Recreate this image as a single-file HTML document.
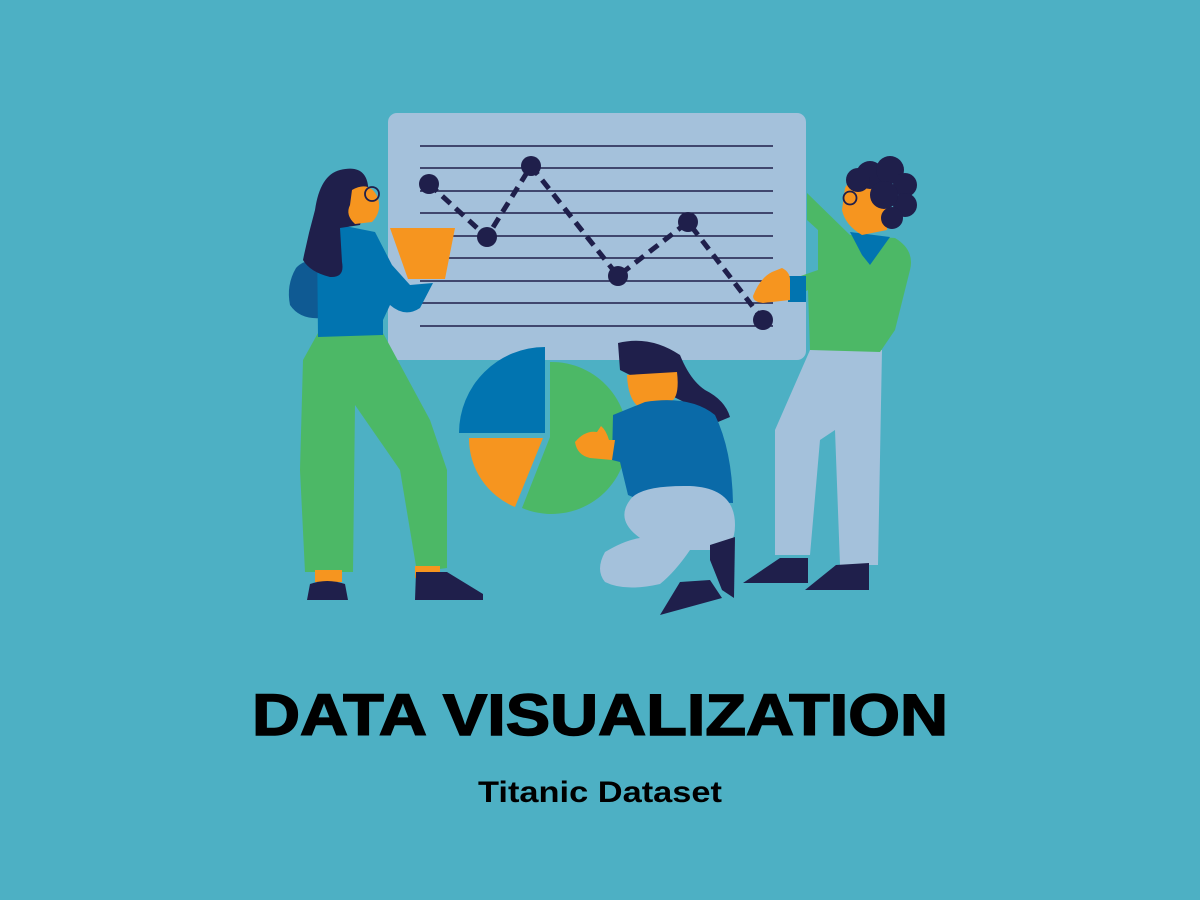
<!DOCTYPE html>
<html><head><meta charset="utf-8"><style>
html,body{margin:0;padding:0;background:#4db0c4;}
svg{display:block}
</style></head><body>
<svg width="1200" height="900" viewBox="0 0 1200 900" xmlns="http://www.w3.org/2000/svg">
<rect width="1200" height="900" fill="#4db0c4"/>
<!-- board -->
<rect x="388" y="113" width="418" height="247" rx="9" fill="#a4c1db"/>
<g stroke="#1f1f4b" stroke-width="1.5">
<line x1="420" y1="146" x2="773" y2="146"/><line x1="420" y1="168" x2="773" y2="168"/>
<line x1="420" y1="191" x2="773" y2="191"/><line x1="420" y1="213" x2="773" y2="213"/>
<line x1="420" y1="236" x2="773" y2="236"/><line x1="420" y1="258" x2="773" y2="258"/>
<line x1="420" y1="281" x2="773" y2="281"/><line x1="420" y1="303" x2="773" y2="303"/>
<line x1="420" y1="326" x2="773" y2="326"/>
</g>
<polyline points="429,184 487,237 531,166 618,276 688,222 763,320" fill="none" stroke="#1f1f4b" stroke-width="5" stroke-dasharray="11,7"/>
<g fill="#1f1f4b"><circle cx="429" cy="184" r="10"/><circle cx="487" cy="237" r="10"/><circle cx="531" cy="166" r="10"/><circle cx="618" cy="276" r="10"/><circle cx="688" cy="222" r="10"/><circle cx="763" cy="320" r="10"/></g>
<!-- pie -->
<path d="M545,433 L459,433 A86,86 0 0 1 545,347 Z" fill="#0174b0"/>
<path d="M543,438 L469,438 A74,74 0 0 0 515,507 Z" fill="#f6951f"/>
<path d="M550,437 L550,362 A76,76 0 1 1 522,508 Z" fill="#4cb866"/>
<!-- left woman -->
<path d="M318,333 L383,333 L430,420 L447,470 L447,568 L417,572 L400,470 L355,405 L353,572 L305,572 L300,470 L303,360 Z" fill="#4cb866"/>
<rect x="315" y="570" width="27" height="12" fill="#f6951f"/>
<rect x="415" y="566" width="25" height="12" fill="#f6951f"/>
<path d="M307,600 L310,584 Q327,578 345,584 L348,600 Z" fill="#1f1f4b"/>
<path d="M415,600 L416,572 L447,572 L483,594 L483,600 Z" fill="#1f1f4b"/>
<path d="M296,268 Q305,258 320,262 L322,318 Q300,320 290,305 Q286,285 296,268 Z" fill="#0f5a93"/>
<path d="M317,236 L345,226 L375,232 L392,265 L410,285 L433,283 L420,308 Q405,318 390,305 L383,320 L383,335 L318,337 Z" fill="#0174b0"/>
<path d="M390,228 L455,228 L445,279 L408,279 Z" fill="#f6951f"/>
<path d="M340,170 Q372,162 368,200 L360,225 L340,228 L342,262 Q345,278 330,277 Q310,272 303,260 Q308,235 315,210 Q320,175 340,170 Z" fill="#1f1f4b"/>
<path d="M352,190 Q370,180 378,198 Q382,212 372,222 L355,224 Q345,215 350,205 Z" fill="#f6951f"/>
<circle cx="372" cy="194" r="7" fill="none" stroke="#1f1f4b" stroke-width="1.8"/>
<!-- crouching woman -->
<path d="M618,343 Q650,335 680,355 Q690,380 705,390 Q725,400 730,417 L718,422 Q700,410 680,400 L620,370 Z" fill="#1f1f4b"/>
<path d="M627,375 L677,372 Q680,398 670,402 L640,408 Q628,400 627,375 Z" fill="#f6951f"/>
<path d="M613,415 L645,402 Q690,395 715,415 Q732,450 733,503 L640,500 L628,495 L620,462 L612,460 Z" fill="#0a6aa8"/>
<path d="M575,442 Q585,430 597,432 L601,426 Q606,430 609,440 L615,440 L612,460 L590,458 Q577,455 575,442 Z" fill="#f6951f"/>
<path d="M630,500 Q640,485 690,486 Q735,488 735,525 Q735,548 718,550 L690,550 Q675,572 660,584 Q625,592 605,582 Q595,570 605,552 Q625,540 640,538 Q615,520 630,500 Z" fill="#a4c1db"/>
<path d="M660,615 L680,582 L710,580 L722,598 Z" fill="#1f1f4b"/>
<path d="M710,545 L735,537 L734,598 L722,590 L710,560 Z" fill="#1f1f4b"/>
<!-- right man -->
<path d="M810,350 L882,350 L878,565 L840,565 L835,430 L820,440 L810,555 L775,555 L775,430 Z" fill="#a4c1db"/>
<path d="M743,583 L780,558 L808,558 L808,583 Z" fill="#1f1f4b"/>
<path d="M805,590 L836,565 L869,563 L869,590 Z" fill="#1f1f4b"/>
<path d="M807,193 L850,235 L895,238 Q915,250 910,270 L895,330 L880,352 L810,350 L808,290 L790,300 L795,278 L818,270 L818,230 L807,220 Z" fill="#4cb866"/>
<rect x="788" y="276" width="18" height="26" fill="#0174b0"/>
<path d="M753,296 Q760,278 772,272 L782,268 Q790,272 790,280 L790,300 L763,303 Q753,302 753,296 Z" fill="#f6951f"/>
<path d="M850,232 L890,237 L870,265 L862,255 Z" fill="#0174b0"/>
<path d="M845,188 Q850,178 868,180 L888,200 L887,230 L862,235 Q845,225 842,210 Z" fill="#f6951f"/>
<g fill="#1f1f4b"><circle cx="870" cy="175" r="14"/><circle cx="890" cy="170" r="14"/><circle cx="905" cy="185" r="12"/><circle cx="905" cy="205" r="12"/><circle cx="892" cy="218" r="11"/><circle cx="858" cy="180" r="12"/><circle cx="884" cy="195" r="14"/></g>
<circle cx="850" cy="198" r="6.5" fill="none" stroke="#1f1f4b" stroke-width="1.8"/>
<!-- text -->
<text x="600" y="735" text-anchor="middle" font-family="Liberation Sans, sans-serif" font-weight="900" font-size="58" fill="#000" textLength="696" lengthAdjust="spacingAndGlyphs" stroke="#000" stroke-width="1.5">DATA VISUALIZATION</text>
<text x="600" y="802" text-anchor="middle" font-family="Liberation Sans, sans-serif" font-weight="700" font-size="30" fill="#000" textLength="244" lengthAdjust="spacingAndGlyphs">Titanic Dataset</text>
</svg>
</body></html>
